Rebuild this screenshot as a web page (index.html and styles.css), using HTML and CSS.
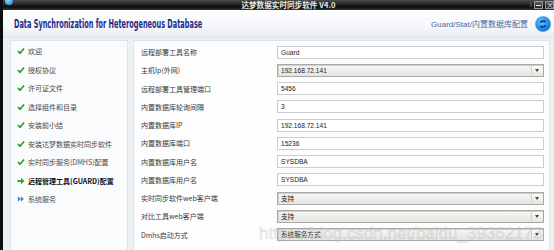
FILE: index.html
```html
<!DOCTYPE html>
<html lang="zh">
<head>
<meta charset="utf-8">
<link rel="stylesheet" href="styles.css">
</head>
<body>
<div class="window">
  <div class="titlebar">
    <span class="app-dot"></span>
    <span class="title-text">达梦数据实时同步软件 V4.0</span>
    <div class="win-btns">
      <span class="wb-help">⁝</span>
      <span class="wb wb-min"></span>
      <span class="wb wb-close">×</span>
    </div>
  </div>
  <div class="header">
    <div class="brand-wrap"><div class="brand">Data Synchronization for Heterogeneous Database</div></div>
    <div class="header-right">
      <span class="crumb">Guard/Stat/内置数据库配置</span>
      <svg class="logo" width="16" height="16" viewBox="0 0 16 16">
        <defs>
          <radialGradient id="lg" cx="40%" cy="35%" r="70%">
            <stop offset="0" stop-color="#5ec8ff"/>
            <stop offset="1" stop-color="#0a6fd0"/>
          </radialGradient>
        </defs>
        <circle cx="8" cy="8" r="7.8" fill="url(#lg)"/>
        <path d="M4.5 6.2 C6 3.6 10.5 3.8 11.5 5.6 L9.6 6.6 C8.8 5.6 7 5.6 6.3 6.9 Z" fill="#0b3a8a"/>
        <path d="M11.5 9.8 C10 12.4 5.5 12.2 4.5 10.4 L6.4 9.4 C7.2 10.4 9 10.4 9.7 9.1 Z" fill="#0b3a8a"/>
      </svg>
    </div>
  </div>
  <div class="content">
    <ul class="steps">
      <li><svg class="ic" viewBox="0 0 10 10"><path d="M1.2 5.2 L3.8 7.8 L8.8 1.8" fill="none" stroke="#2f9f2f" stroke-width="2.2"/></svg>欢迎</li>
      <li><svg class="ic" viewBox="0 0 10 10"><path d="M1.2 5.2 L3.8 7.8 L8.8 1.8" fill="none" stroke="#2f9f2f" stroke-width="2.2"/></svg>授权协议</li>
      <li><svg class="ic" viewBox="0 0 10 10"><path d="M1.2 5.2 L3.8 7.8 L8.8 1.8" fill="none" stroke="#2f9f2f" stroke-width="2.2"/></svg>许可证文件</li>
      <li><svg class="ic" viewBox="0 0 10 10"><path d="M1.2 5.2 L3.8 7.8 L8.8 1.8" fill="none" stroke="#2f9f2f" stroke-width="2.2"/></svg>选择组件和目录</li>
      <li><svg class="ic" viewBox="0 0 10 10"><path d="M1.2 5.2 L3.8 7.8 L8.8 1.8" fill="none" stroke="#2f9f2f" stroke-width="2.2"/></svg>安装前小结</li>
      <li><svg class="ic" viewBox="0 0 10 10"><path d="M1.2 5.2 L3.8 7.8 L8.8 1.8" fill="none" stroke="#2f9f2f" stroke-width="2.2"/></svg>安装达梦数据实时同步软件</li>
      <li><svg class="ic" viewBox="0 0 10 10"><path d="M1.2 5.2 L3.8 7.8 L8.8 1.8" fill="none" stroke="#2f9f2f" stroke-width="2.2"/></svg>实时同步服务(DMHS)配置</li>
      <li class="current"><svg class="ic" viewBox="0 0 10 10"><path d="M0.5 3.6 H5 V1 L9.5 5 L5 9 V6.4 H0.5 Z" fill="#35a535"/></svg>远程管理工具(GUARD)配置</li>
      <li><svg class="ic" viewBox="0 0 10 10"><path d="M1 1.5 L4.6 5 L1 8.5 Z M4.8 1.5 L8.6 5 L4.8 8.5 Z" fill="#3d86d8"/></svg>系统服务</li>
    </ul>
    <div class="form">
      <div class="row"><span class="lbl">远程部署工具名称</span><span class="field">Guard</span></div>
      <div class="row"><span class="lbl">主机Ip(外网)</span><span class="field sel">192.168.72.141<span class="arrow"></span></span></div>
      <div class="row"><span class="lbl">远程部署工具管理端口</span><span class="field">5456</span></div>
      <div class="row"><span class="lbl">内置数据库轮询间隔</span><span class="field">3</span></div>
      <div class="row"><span class="lbl">内置数据库IP</span><span class="field">192.168.72.141</span></div>
      <div class="row"><span class="lbl">内置数据库端口</span><span class="field">15236</span></div>
      <div class="row"><span class="lbl">内置数据库用户名</span><span class="field">SYSDBA</span></div>
      <div class="row"><span class="lbl">内置数据库用户名</span><span class="field">SYSDBA</span></div>
      <div class="row"><span class="lbl">实时同步软件web客户端</span><span class="field sel">支持<span class="arrow"></span></span></div>
      <div class="row"><span class="lbl">对比工具web客户端</span><span class="field sel">支持<span class="arrow"></span></span></div>
      <div class="row"><span class="lbl">Dmhs启动方式</span><span class="field sel">系统服务方式<span class="arrow"></span></span></div>
    </div>
  </div>
  <div class="watermark">https://blog.csdn.net/baidu_39362173</div>
</div>
</body>
</html>
```

FILE: styles.css
```css
* { box-sizing: border-box; }
html, body { margin: 0; padding: 0; }
body {
  width: 554px;
  height: 250px;
  overflow: hidden;
  background: #1a1a1a;
  font-family: "Noto Sans CJK SC", "DejaVu Sans", sans-serif;
}
.window {
  position: relative;
  width: 554px;
  height: 250px;
  overflow: hidden;
  border-left: 3px solid #0d0d0d;
  display: flex;
  flex-direction: column;
  background: #eef1f4;
}
.titlebar {
  height: 10px;
  flex: none;
  background: linear-gradient(#4a4d48, #0c0c0c 70%, #2c3a2a);
  position: relative;
  display: flex;
  align-items: center;
  justify-content: center;
}
.app-dot {
  position: absolute;
  left: 2px;
  top: -3px;
  width: 8px;
  height: 8px;
  border-radius: 50%;
  background: radial-gradient(circle at 40% 40%, #8fd8ff, #1a7ed6);
}
.title-text {
  color: #e8e8e8;
  font-size: 7.5px;
  line-height: 10px;
  font-weight: bold;
  margin-left: 20px;
  letter-spacing: 0.1px;
}
.win-btns {
  position: absolute;
  right: 0;
  top: 0;
  display: flex;
  align-items: center;
  gap: 2px;
  height: 9px;
}
.wb-help { color: #ddd; font-size: 7px; line-height: 9px; }
.wb {
  width: 9px;
  height: 8px;
  border: 1px solid #9a9a9a;
  background: linear-gradient(#5c5c5c, #222);
  color: #eee;
  font-size: 8px;
  line-height: 6px;
  text-align: center;
}
.wb-min::after {
  content: "";
  display: block;
  margin: 3px auto 0;
  width: 5px;
  height: 1px;
  background: #eee;
}
.header {
  height: 28px;
  flex: none;
  background: linear-gradient(#ffffff, #f5f7fa 60%, #e9edf2);
  display: flex;
  align-items: center;
  justify-content: space-between;
  padding: 0 3px 0 11px;
  border-bottom: 1px solid #e1e5ea;
}
.brand-wrap { width: 200px; overflow: visible; }
.brand {
  font-family: "DejaVu Sans", sans-serif;
  font-weight: bold;
  font-size: 11.5px;
  color: #1d2c8c;
  white-space: nowrap;
  transform: scaleX(0.57);
  transform-origin: left center;
  margin-top: 1px;
}
.header-right { display: flex; align-items: center; gap: 7px; }
.crumb { color: #4a6aa5; font-size: 8px; font-family: "Liberation Sans", "Noto Sans CJK SC", sans-serif; }
.logo { display: block; }
.content {
  flex: 1;
  display: flex;
  gap: 5px;
  padding: 2px 4px 0 7px;
  background: #eef1f4;
}
.steps {
  list-style: none;
  margin: 0;
  padding: 1px 0 0 6px;
  width: 118px;
  flex: none;
  background: #f9fbfc;
  border: 1px solid #dfe3e8;
  border-bottom: none;
}
.steps li {
  height: 18.5px;
  font-size: 7px;
  color: #4a4a4a;
  display: flex;
  align-items: center;
  white-space: nowrap;
}
.steps .ic {
  width: 8px;
  height: 8px;
  flex: none;
  margin-right: 3px;
}
.steps li.current { font-weight: bold; color: #111; }
.form {
  flex: 1;
  background: #fdfdfe;
  border: 1px solid #dfe3e8;
  border-bottom: none;
  padding: 2px 5px 0 7px;
}
.row {
  height: 18.25px;
  display: flex;
  align-items: center;
}
.lbl {
  width: 136px;
  flex: none;
  font-size: 7px;
  color: #3a3a3a;
  white-space: nowrap;
}
.field {
  flex: 1;
  height: 13px;
  border: 1px solid #c9cdd2;
  background: #fff;
  font-family: "Liberation Sans", "Noto Sans CJK SC", sans-serif;
  font-size: 6.6px;
  line-height: 11px;
  color: #222;
  padding-left: 3px;
  position: relative;
}
.field.sel {
  border-color: #a9aaa8;
  background: linear-gradient(#f7f7f5, #e4e4e1);
  box-shadow: inset 1px 1px 0 #cfcfcc;
}
.arrow {
  position: absolute;
  right: 1px;
  top: 1px;
  width: 11px;
  height: 9px;
  border-left: 1px solid #d0d0cc;
  background: linear-gradient(#fbfbfa, #e7e7e4);
}
.arrow::after {
  content: "";
  position: absolute;
  left: 3px;
  top: 3px;
  border-left: 2px solid transparent;
  border-right: 2px solid transparent;
  border-top: 3px solid #3c4a2c;
}
.watermark {
  position: absolute;
  left: 256px;
  top: 224px;
  font-family: "Liberation Sans", sans-serif;
  font-size: 17px;
  color: rgba(205, 205, 205, 0.3);
  -webkit-text-stroke: 0.5px rgba(170, 170, 170, 0.4);
  white-space: nowrap;
  pointer-events: none;
}
```
